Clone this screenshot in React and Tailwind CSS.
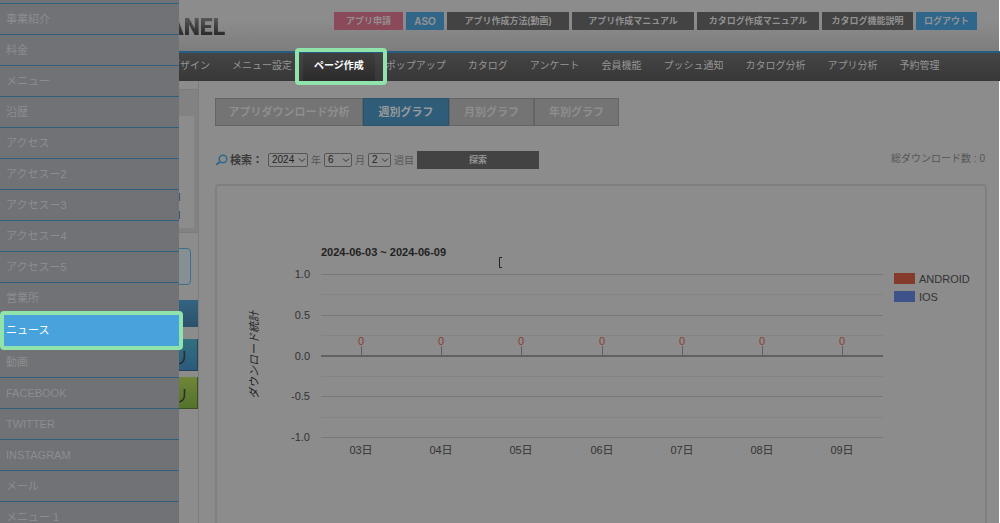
import { Fragment } from 'react';
import clsx from 'clsx';

const drawerItems = [
  '事業紹介',
  '料金',
  'メニュー',
  '沿歴',
  'アクセス',
  'アクセスー2',
  'アクセスー3',
  'アクセスー4',
  'アクセスー5',
  '営業所',
  'ニュース',
  '動画',
  'FACEBOOK',
  'TWITTER',
  'INSTAGRAM',
  'メール',
  'メニュー 1',
];

const headerLinks = [
  { label: 'アプリ申請', className: 'w-[69px] bg-[#8b4a59] text-[9px]' },
  { label: 'ASO', className: 'w-[38px] bg-[#316688] text-[10px]' },
  { label: 'アプリ作成方法(動画)', className: 'w-[122px] bg-[#434343] text-[9px]' },
  { label: 'アプリ作成マニュアル', className: 'w-[122px] bg-[#434343] text-[9px]' },
  { label: 'カタログ作成マニュアル', className: 'w-[122px] bg-[#434343] text-[9px]' },
  { label: 'カタログ機能説明', className: 'w-[91px] bg-[#434343] text-[9px]' },
  { label: 'ログアウト', className: 'w-[61px] bg-[#2f678c] text-[9px]' },
];

const navItems = [
  'デザイン',
  'メニュー設定',
  'ページ作成',
  'ポップアップ',
  'カタログ',
  'アンケート',
  '会員機能',
  'プッシュ通知',
  'カタログ分析',
  'アプリ分析',
  '予約管理',
];

const tabs = [
  { label: 'アプリダウンロード分析', width: 'w-[148px]' },
  { label: '週別グラフ', width: 'w-[86px]', active: true },
  { label: '月別グラフ', width: 'w-[85px]' },
  { label: '年別グラフ', width: 'w-[85px]' },
];

const periods = [
  { id: 'year', value: '2024', unit: '年', width: 'w-10' },
  { id: 'month', value: '6', unit: '月', width: 'w-7' },
  { id: 'week', value: '2', unit: '週目', width: 'w-[23px]' },
];

const days = ['03日', '04日', '05日', '06日', '07日', '08日', '09日'];
const levels = ['1.0', '0.5', '0.0', '-0.5', '-1.0'];

function Drawer() {
  return (
    <aside className="absolute inset-y-0 left-0 z-20 w-[179px] bg-[#717276]">
      <div className="h-1 border-b border-[#30607e]" />
      <ul>
        {drawerItems.map((item) => {
          const active = item === 'ニュース';
          return (
            <li key={item} className="relative">
              <a
                href="#"
                className={clsx(
                  'flex items-center px-[6px] text-[11px]',
                  active
                    ? 'h-[33px] bg-[#48a2dc] text-white'
                    : 'h-[31px] border-b border-[#30607e] text-[#8c8d8f]'
                )}
              >
                {item}
              </a>
              {active && (
                <span className="pointer-events-none absolute -top-[3px] -right-1 -bottom-[3px] left-0 z-10 rounded-[4px] border-4 border-[#8fe3ab]" />
              )}
            </li>
          );
        })}
      </ul>
    </aside>
  );
}

function Header() {
  return (
    <header className="flex h-[51px] items-start justify-between border-r border-white bg-linear-to-b from-[#8c8c8c] from-40% to-[#7d7d7d] pr-[22px]">
      <div className="bg-linear-to-b from-[#666] from-30% to-[#2e2e2e] to-80% bg-clip-text pt-[14px] pl-[155px] font-[Roboto] text-[23px] leading-7 font-black text-transparent">
        PANEL
      </div>
      <div className="flex gap-[3px] pt-3">
        {headerLinks.map((link) => (
          <a
            key={link.label}
            href="#"
            className={clsx(
              'flex h-[18px] items-center justify-center pt-px font-bold whitespace-nowrap text-[#929292]',
              link.className
            )}
          >
            {link.label}
          </a>
        ))}
      </div>
    </header>
  );
}

function Nav() {
  return (
    <nav className="flex h-[30px] border-t-2 border-[#265c82] bg-linear-to-b from-[#454545] to-[#373737] pl-[159px]">
      {navItems.map((item) => {
        const active = item === 'ページ作成';
        return (
          <a
            key={item}
            href="#"
            className={clsx(
              'relative flex items-center px-[11px] pb-[3px] text-[10px] whitespace-nowrap',
              active
                ? 'bg-linear-to-b from-[#3f3f3f] to-[#2b2b2b] font-bold text-white'
                : 'text-[#959595]'
            )}
          >
            {item}
            {active && (
              <span className="pointer-events-none absolute -top-[5px] -right-3 -bottom-1 -left-2 z-10 rounded-[4px] border-4 border-[#8fe3ab]" />
            )}
          </a>
        );
      })}
    </nav>
  );
}

function Sidebar() {
  return (
    <div className="w-[199px] shrink-0 border-r border-[#7c7c7c]">
      <div className="h-[9px] border-b border-[#7c7c7c]" />
      <div className="border-r-4 border-b-4 border-[#828282]">
        <div className="h-[26px] bg-[#828282]" />
        <div className="flex h-[112px] flex-col items-end justify-end pr-[13px] pb-1 text-[9px] leading-[18px] font-bold text-[#3a3a3a]">
          <span>0 日</span>
          <span>0 日</span>
        </div>
      </div>
      <div className="border-t border-[#7c7c7c] pt-[15px]">
        <div className="mr-[7px] h-[37px] rounded-[4px] border border-[#3b7088] bg-[#869094]" />
        <div className="mt-[15px] h-[27px] bg-linear-to-b from-[#336483] to-[#2b5169]" />
        <button className="mt-3 flex h-8 w-full items-center justify-end border-r border-b border-[#28434f] bg-linear-to-b from-[#317080] to-[#2b5a7c] pt-2 pr-2 text-[17px] text-[#2a2a2a]">
          アプリ
        </button>
        <button className="mt-[6px] flex h-8 w-full items-center justify-end border-r border-b border-[#3a5020] bg-linear-to-b from-[#70863a] to-[#53732a] pt-2 pr-2 text-[17px] text-[#2a2a2a]">
          アプリ
        </button>
      </div>
    </div>
  );
}

function SearchBar() {
  return (
    <form className="mt-[25px] flex h-[18px] items-center text-[10px] text-[#555]">
      <svg viewBox="0 0 13 12" className="h-3 w-[13px] text-[#30698c]" fill="none" stroke="currentColor">
        <circle cx="8" cy="5" r="3.8" strokeWidth="1.5" />
        <path d="M5.2 7.8 1.2 10.8" strokeWidth="2" />
      </svg>
      <span className="w-10 pl-[2px] text-[11px] font-bold whitespace-nowrap text-[#3a3a3a]">検索：</span>
      {periods.map((period) => (
        <Fragment key={period.id}>
          <span className={clsx('relative h-[14px]', period.width)}>
            <select
              id={period.id}
              defaultValue={period.value}
              className="block h-full w-full appearance-none rounded-[2px] border border-[#565656] bg-[#8e8e8e] pl-[3px] text-[10px] leading-3 text-[#222]"
            >
              <option>{period.value}</option>
            </select>
            <svg
              viewBox="0 0 8 6"
              className="pointer-events-none absolute top-1 right-[2px] h-[6px] w-2"
              fill="none"
              stroke="#333"
            >
              <path d="m1 1.5 3 3 3-3" />
            </svg>
          </span>
          <label htmlFor={period.id} className="px-[3px] whitespace-nowrap">
            {period.unit}
          </label>
        </Fragment>
      ))}
      <button type="button" className="h-[18px] w-[122px] bg-[#434343] pt-px text-[9px] font-bold text-[#929292]">
        探索
      </button>
      <span className="ml-auto pr-[2px] pb-1 text-[10px] whitespace-nowrap">総ダウンロード数 : 0</span>
    </form>
  );
}

function Chart() {
  return (
    <svg viewBox="0 0 768 345" className="block w-full" fontSize="11" fill="#333">
      <text x="104" y="70" fontWeight="bold" fill="#222">
        2024-06-03 ~ 2024-06-09
      </text>
      <path d="M285 71.5h-2.5v10h2.5" fill="none" stroke="#222" />

      {/* grid */}
      {Array.from({ length: 9 }, (_, i) => (
        <rect
          key={i}
          x="104"
          y={Math.round(88 + i * 20.4)}
          width="562"
          height="1"
          fill={i % 2 ? '#848484' : '#777'}
        />
      ))}
      {levels.map((level, i) => (
        <text key={level} x="93" y={Math.round(92 + i * 40.8)} textAnchor="end">
          {level}
        </text>
      ))}
      <text transform="translate(41 169) rotate(-90)" textAnchor="middle" fontStyle="italic" fill="#222">
        ダウンロード統計
      </text>

      {/* data points */}
      {days.map((day, i) => {
        const x = Math.round(144 + i * 80.2);
        return (
          <g key={day} textAnchor="middle">
            <rect x={x} y="160" width="1" height="10" fill="#606060" />
            <text x={x} y="159" fill="#8a3d2c">
              0
            </text>
            <text x={x} y="268">
              {day}
            </text>
          </g>
        );
      })}
      <rect x="104" y="169" width="562" height="2" fill="#626262" />

      {/* legend */}
      <rect x="677" y="87" width="21" height="11" fill="#843b2a" />
      <text x="702" y="97">
        ANDROID
      </text>
      <rect x="677" y="105" width="21" height="11" fill="#3d5389" />
      <text x="702" y="115">
        IOS
      </text>
    </svg>
  );
}

export default function App() {
  return (
    <div className="relative flex h-screen flex-col overflow-hidden bg-[#8c8c8c] font-['Liberation_Sans','Noto_Sans_CJK_JP',sans-serif]">
      <Drawer />
      <Header />
      <Nav />
      <div className="flex min-h-0 flex-1 border-r border-white">
        <Sidebar />
        <main className="min-w-0 flex-1 pt-[17px] pr-3 pl-4">
          <div className="flex h-7">
            {tabs.map((tab) => (
              <button
                key={tab.label}
                className={clsx(
                  'border text-[11px] font-bold whitespace-nowrap',
                  tab.width,
                  tab.active
                    ? 'border-[#29526c] bg-[#2e5c79] text-[#9a9a9a]'
                    : 'border-[#646464] bg-[#747474] text-[#8e8e8e]'
                )}
              >
                {tab.label}
              </button>
            ))}
          </div>
          <SearchBar />
          <div className="mt-[15px] rounded-[4px] border-2 border-[#7f7f7f]">
            <Chart />
          </div>
        </main>
      </div>
    </div>
  );
}
